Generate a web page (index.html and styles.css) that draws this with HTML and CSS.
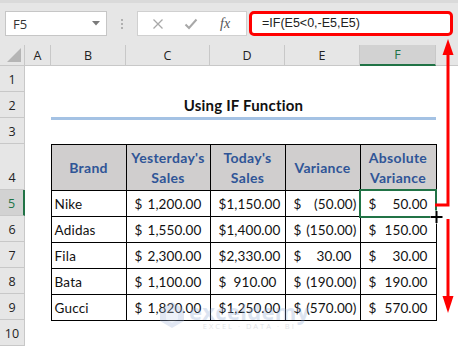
FILE: index.html
```html
<!DOCTYPE html>
<html>
<head>
<meta charset="utf-8">
<link rel="stylesheet" href="styles.css">
</head>
<body>
<div class="app">
  <div class="toolbar">
    <div class="namebox">
      <span class="nb-text">F5</span>
      <svg class="nb-arrow" width="8" height="5" viewBox="0 0 8 5"><path d="M0 0H8L4 4.5Z" fill="#7a7a7a"/></svg>
    </div>
    <div class="dots"><i></i><i></i><i></i></div>
    <div class="fbtns">
      <svg class="ico" width="12" height="12" viewBox="0 0 12 12"><path d="M1.5 1.5L10.5 10.5M10.5 1.5L1.5 10.5" stroke="#a8a8a8" stroke-width="1.3" fill="none"/></svg>
      <svg class="ico" width="14" height="12" viewBox="0 0 14 12"><path d="M1.5 6.5L5 10L12.5 1.5" stroke="#a8a8a8" stroke-width="2" fill="none"/></svg>
      <span class="fx">fx</span>
    </div>
    <div class="formula">=IF(E5&lt;0,-E5,E5)</div>
  </div>

  <div class="sheet">
    <div class="corner"><svg width="14" height="14" viewBox="0 0 14 14"><path d="M14 0V14H0Z" fill="#b5b5b5"/></svg></div>
    <div class="ch">A</div>
    <div class="ch">B</div>
    <div class="ch">C</div>
    <div class="ch">D</div>
    <div class="ch">E</div>
    <div class="ch sel">F</div>
    <div class="ch last"></div>

    <div class="rh">1</div>
    <div class="rh">2</div>
    <div class="rh">3</div>
    <div class="rh">4</div>
    <div class="rh sel">5</div>
    <div class="rh">6</div>
    <div class="rh">7</div>
    <div class="rh">8</div>
    <div class="rh">9</div>
    <div class="rh">10</div>

    <div class="title">Using IF Function</div>

    <table class="data">
      <colgroup><col class="c-b"><col class="c-c"><col class="c-d"><col class="c-e"><col class="c-f"></colgroup>
      <thead>
        <tr class="hrow">
          <th>Brand</th>
          <th>Yesterday's<br>Sales</th>
          <th>Today's<br>Sales</th>
          <th>Variance</th>
          <th>Absolute<br>Variance</th>
        </tr>
      </thead>
      <tbody>
        <tr>
          <td class="brand">Nike</td>
          <td><div class="acc"><span>$</span><span class="pos">1,200.00</span></div></td>
          <td><div class="acc tight"><span>$</span><span class="pos">1,150.00</span></div></td>
          <td><div class="acc"><span>$</span><span>(50.00)</span></div></td>
          <td class="active"><div class="acc"><span>$</span><span class="pos">50.00</span></div></td>
        </tr>
        <tr>
          <td class="brand">Adidas</td>
          <td><div class="acc"><span>$</span><span class="pos">1,550.00</span></div></td>
          <td><div class="acc tight"><span>$</span><span class="pos">1,400.00</span></div></td>
          <td><div class="acc"><span>$</span><span>(150.00)</span></div></td>
          <td><div class="acc"><span>$</span><span class="pos">150.00</span></div></td>
        </tr>
        <tr>
          <td class="brand">Fila</td>
          <td><div class="acc"><span>$</span><span class="pos">2,300.00</span></div></td>
          <td><div class="acc tight"><span>$</span><span class="pos">2,330.00</span></div></td>
          <td><div class="acc"><span>$</span><span class="pos">30.00</span></div></td>
          <td><div class="acc"><span>$</span><span class="pos">30.00</span></div></td>
        </tr>
        <tr>
          <td class="brand">Bata</td>
          <td><div class="acc"><span>$</span><span class="pos">1,100.00</span></div></td>
          <td><div class="acc"><span>$</span><span class="pos">910.00</span></div></td>
          <td><div class="acc"><span>$</span><span>(190.00)</span></div></td>
          <td><div class="acc"><span>$</span><span class="pos">190.00</span></div></td>
        </tr>
        <tr>
          <td class="brand">Gucci</td>
          <td><div class="acc"><span>$</span><span class="pos">1,820.00</span></div></td>
          <td><div class="acc tight"><span>$</span><span class="pos">1,250.00</span></div></td>
          <td><div class="acc"><span>$</span><span>(570.00)</span></div></td>
          <td><div class="acc"><span>$</span><span class="pos">570.00</span></div></td>
        </tr>
      </tbody>
    </table>
  </div>

  <div class="watermark">
    <svg class="wm-logo" width="26" height="28" viewBox="0 0 26 28"><path d="M13 1L25 8V20L13 27L1 20V8Z" fill="#9db3d9"/><path d="M13 8L19 11.5V18.5L13 22L7 18.5V11.5Z" fill="#c9d6ec"/></svg>
    <div class="wm-text">
      <span class="wm-name">exceldemy</span>
      <span class="wm-sub">EXCEL · DATA · BI</span>
    </div>
  </div>

  <svg class="annot" width="458" height="346" viewBox="0 0 458 346">
    <polyline points="435,205 448,205 448,50" fill="none" stroke="#ff0000" stroke-width="3"/>
    <polygon points="442.5,55 453.5,55 448,39" fill="#ff0000"/>
    <line x1="448" y1="219" x2="448" y2="298" stroke="#ff0000" stroke-width="3"/>
    <polygon points="442.5,296 453.5,296 448,313" fill="#ff0000"/>
    <path d="M430 217H443M436.5 210.5V223.5" stroke="#ffffff" stroke-width="4"/>
    <path d="M430.5 217H442.5M436.5 211V223" stroke="#000000" stroke-width="2"/>
  </svg>
</div>
</body>
</html>
```

FILE: styles.css
```css
* { box-sizing: border-box; }
html, body { margin: 0; padding: 0; }
body { width: 458px; height: 346px; overflow: hidden; background: #ffffff; }

.app {
  position: relative;
  width: 458px;
  height: 346px;
  overflow: hidden;
  font-family: Lato, "Liberation Sans", sans-serif;
}

/* ---------- toolbar ---------- */
.toolbar {
  height: 45px;
  background: #e6e6e6;
  border-top: 3px solid #dadada;
  display: flex;
  align-items: flex-start;
  padding: 8px 0 0 5px;
}
.namebox {
  width: 102px;
  height: 25px;
  background: #ffffff;
  border: 1px solid #c6c6c6;
  display: flex;
  align-items: center;
  justify-content: space-between;
  padding: 0 6px 0 7px;
}
.nb-text {
  font-family: "Open Sans", "Liberation Sans", sans-serif;
  font-size: 13px;
  color: #333333;
}
.dots {
  width: 30px;
  height: 25px;
  display: flex;
  flex-direction: column;
  align-items: center;
  justify-content: center;
  gap: 2px;
}
.dots i {
  display: block;
  width: 2px;
  height: 2px;
  background: #b0b0b0;
}
.fbtns {
  width: 110px;
  height: 25px;
  background: #ffffff;
  border: 1px solid #d0d0d0;
  display: flex;
  align-items: center;
  padding: 0 0 0 14px;
  gap: 20px;
}
.fx {
  font-family: "Liberation Serif", serif;
  font-style: italic;
  font-size: 14px;
  color: #555555;
  margin-left: 2px;
}
.formula {
  margin-left: 2px;
  width: 204px;
  height: 25px;
  background: #ffffff;
  border: 3px solid #ff0000;
  border-radius: 5px;
  font-family: "Liberation Sans", sans-serif;
  font-size: 12.5px;
  line-height: 19px;
  color: #222222;
  padding-left: 10px;
}

/* ---------- sheet ---------- */
.sheet {
  display: grid;
  grid-template-columns: 25px 26px 75px 84px 75px 75px 76px 22px;
  grid-template-rows: 21px 26px 26px 26px 46px 26px 26px 26px 26px 26px 26px;
  background: #ffffff;
}
.corner {
  background: #e6e6e6;
  border-right: 1px solid #c8c8c8;
  border-bottom: 1px solid #c8c8c8;
  display: flex;
  align-items: flex-end;
  justify-content: flex-end;
  padding: 0 3px 3px 0;
}
.ch {
  background: #e6e6e6;
  border-right: 1px solid #c8c8c8;
  border-bottom: 1px solid #c8c8c8;
  font-family: "Open Sans", "Liberation Sans", sans-serif;
  font-size: 12.5px;
  color: #222222;
  display: flex;
  align-items: center;
  justify-content: center;
}
.ch.last { border-right: none; }
.ch.sel {
  background: #d2d2d2;
  color: #217346;
  border-bottom: 2px solid #217346;
}
.rh {
  grid-column: 1;
  background: #e6e6e6;
  border-right: 1px solid #c8c8c8;
  border-bottom: 1px solid #c8c8c8;
  font-family: "Open Sans", "Liberation Sans", sans-serif;
  font-size: 12.5px;
  color: #222222;
  display: flex;
  align-items: flex-end;
  justify-content: center;
  padding-bottom: 3px;
}
.rh.sel {
  background: #d2d2d2;
  color: #217346;
  border-right: 2px solid #217346;
}

.title {
  grid-row: 3;
  grid-column: 3 / 8;
  align-self: start;
  height: 28px;
  border-bottom: 3px solid #a4c2e4;
  font-weight: 700;
  font-size: 15px;
  color: #111111;
  text-align: center;
  line-height: 26px;
  letter-spacing: 0.2px;
}

.data {
  grid-row: 5 / 11;
  grid-column: 3 / 8;
  border-collapse: collapse;
  table-layout: fixed;
  width: 386px;
  margin-left: -0.5px;
  font-size: 13.5px;
  color: #111111;
}
.c-b { width: 75px; }
.c-c { width: 84px; }
.c-d { width: 75px; }
.c-e { width: 75px; }
.c-f { width: 76px; }
.data th, .data td {
  border: 1px solid #000000;
  padding: 0;
}
.data th {
  height: 46px;
  background: #d0cece;
  color: #2f5597;
  font-weight: 700;
  font-size: 14px;
  line-height: 20px;
  text-align: center;
  letter-spacing: 0.3px;
}
.data td { height: 26px; }
.data td.brand { padding-left: 3px; letter-spacing: 0.2px; }
.acc {
  display: flex;
  justify-content: space-between;
  padding: 0 3px 0 8px;
  letter-spacing: 0.1px;
}
.acc .pos { padding-right: 5px; }
.data td.active { position: relative; }
.data td.active::after {
  content: "";
  position: absolute;
  left: -2px;
  top: -2px;
  right: -1px;
  bottom: -2px;
  border: 2px solid #217346;
}

/* ---------- overlays ---------- */
.watermark {
  position: absolute;
  left: 159px;
  top: 301px;
  display: flex;
  align-items: flex-start;
  gap: 4px;
  opacity: 0.3;
  pointer-events: none;
}
.wm-text {
  display: flex;
  flex-direction: column;
  align-items: center;
}
.wm-name {
  font-family: "Open Sans", sans-serif;
  font-weight: 700;
  font-size: 22px;
  line-height: 20px;
  color: #8ea7d2;
  letter-spacing: 0.3px;
}
.wm-sub {
  font-family: "Open Sans", sans-serif;
  font-size: 7.5px;
  line-height: 10px;
  color: #9aa3b0;
  letter-spacing: 2px;
}
.annot {
  position: absolute;
  left: 0;
  top: 0;
  pointer-events: none;
}
```
